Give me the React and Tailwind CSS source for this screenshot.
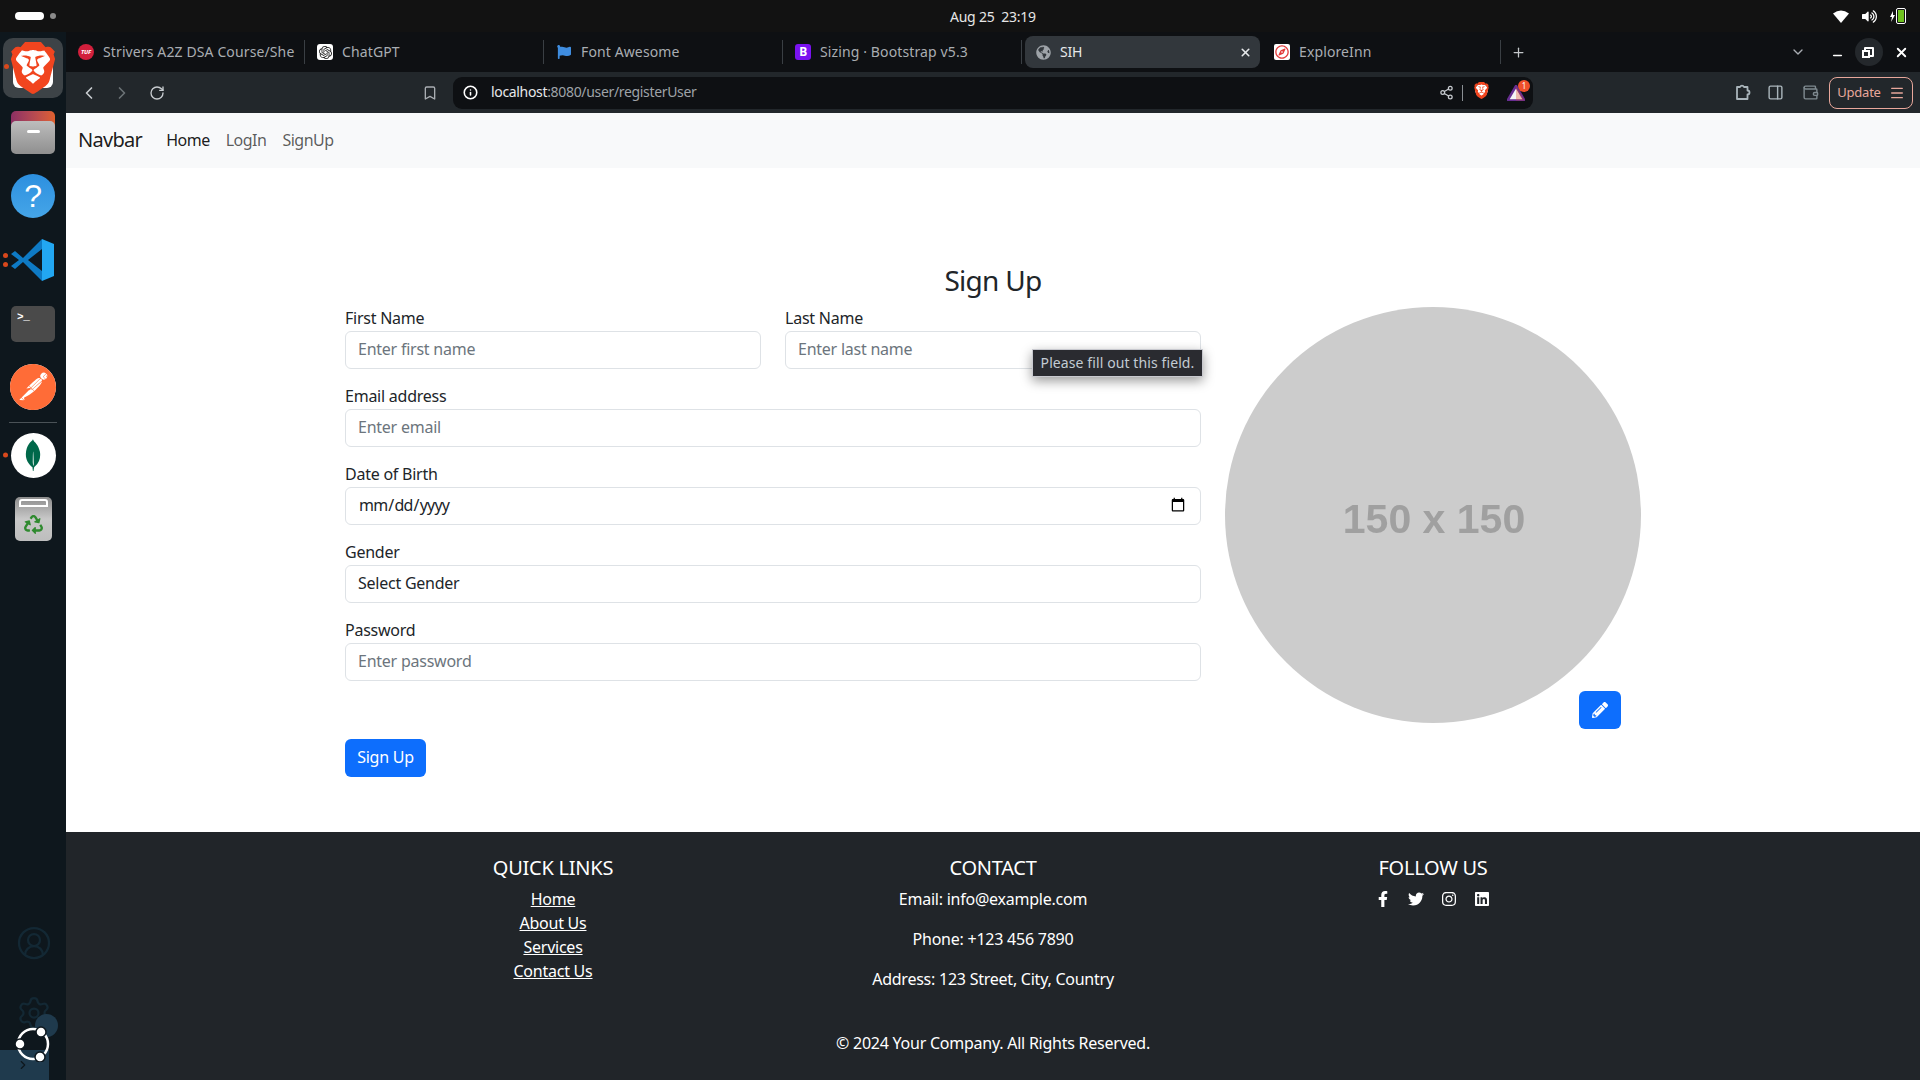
import React from 'react';
import {
  ChevronLeft, ChevronRight, RotateCw, Bookmark, Info, Share2, Plus, ChevronDown, X, Minus,
  PanelRight, Wallet, Menu, CircleUserRound, Settings,
} from 'lucide-react';
import {
  FaFacebookF, FaTwitter, FaInstagram, FaLinkedin, FaPencilAlt, FaFlag, FaGlobeAmericas,
  FaRegCompass, FaRecycle, FaVolumeUp,
} from 'react-icons/fa';
import { SiBrave, SiOpenai, SiPostman, SiMongodb } from 'react-icons/si';

const font = "font-['Noto_Sans','Open_Sans',sans-serif]";

const BraveMark = ({ size }) => (
  <span className="relative inline-flex items-center justify-center" style={{ width: size, height: size }}>
    <span className="absolute inset-[12%] bg-white rounded-md"></span>
    <SiBrave size={size} className="relative text-[#f1451f]" />
  </span>
);

const VsCodeMark = () => (
  <svg width="44" height="44" viewBox="0 0 44 44">
    <path d="M31 1 43 6V38L31 43Z" fill="#22a7f2" />
    <path d="M31 1 12 20 4 13 0 16 8 22 0 28 4 31 12 24 31 43V33L17 22 31 11Z" fill="#0e7ac4" />
  </svg>
);

const DockSlot = ({ children, dot = 0 }) => (
  <div className="relative h-16 flex items-center justify-center">
    {dot > 0 && (
      <div className="absolute left-[3px] top-1/2 -translate-y-1/2 flex flex-col gap-[4px]">
        {dot > 1 && <span className="block w-[5px] h-[5px] rounded-full bg-[#d9481c]"></span>}
        <span className="block w-[5px] h-[5px] rounded-full bg-[#d9481c]"></span>
      </div>
    )}
    {children}
  </div>
);

const Dock = () => (
  <aside className="relative w-[66px] shrink-0 bg-[#0e171d] overflow-hidden">
    <div className="pt-[6px] h-[68px]">
      <div className="relative mx-[3px] w-[60px] h-[60px] rounded-[10px] bg-[#3d4347] flex items-center justify-center">
        <BraveMark size={52} />
        <span className="absolute left-[1px] top-[26px] w-[5px] h-[5px] rounded-full bg-[#d9481c]"></span>
      </div>
    </div>
    <DockSlot>
      <div className="relative w-[44px] h-[43px]">
        <div className="h-[20px] w-full rounded-t-[5px] bg-gradient-to-r from-[#8c2f63] to-[#e0602c]"></div>
        <div className="absolute left-0 right-0 bottom-0 h-[33px] rounded-[5px] bg-gradient-to-b from-[#bdbdbd] to-[#8f8f8f] flex justify-center pt-[9px]">
          <span className="block w-[13px] h-[3px] rounded-sm bg-white"></span>
        </div>
      </div>
    </DockSlot>
    <DockSlot>
      <div className="w-[44px] h-[44px] rounded-full bg-gradient-to-b from-[#2c8fdf] to-[#45a5e8] flex items-center justify-center text-white text-[32px] font-['Liberation_Sans',sans-serif] leading-none">?</div>
    </DockSlot>
    <DockSlot dot={2}>
      <VsCodeMark />
    </DockSlot>
    <DockSlot>
      <div className="w-[44px] h-[36px] rounded-[5px] bg-[#4a4a4a] text-white font-['Liberation_Mono',monospace] text-[11px] leading-none pl-[6px] pt-[6px] font-bold">&gt;_</div>
    </DockSlot>
    <div className="-mt-px">
      <DockSlot>
        <div className="w-[46px] h-[46px] rounded-full bg-white flex items-center justify-center">
          <SiPostman size={46} className="text-[#ff6c37]" />
        </div>
      </DockSlot>
    </div>
    <div className="mx-[9px] mt-[3px] h-px bg-[#4a5257]"></div>
    <DockSlot dot={1}>
      <div className="w-[45px] h-[45px] rounded-full bg-white flex items-center justify-center">
        <SiMongodb size={32} className="text-[#00684a]" />
      </div>
    </DockSlot>
    <DockSlot>
      <div className="w-[37px] h-[44px] rounded-[5px] bg-gradient-to-b from-[#8d8d8d] via-[#c8c8c8] to-[#bdbdbd] flex flex-col items-center">
        <span className="block w-[29px] h-[8px] mt-[2px] border-2 border-white rounded-t-[3px]"></span>
        <FaRecycle size={19} className="text-[#2f8a2f] mt-[8px]" />
      </div>
    </DockSlot>

    {/* faint wallpaper bits, then the ubuntu button on top */}
    <CircleUserRound size={36} strokeWidth={1.5} className="absolute left-[16px] top-[893px] text-[#132834]" />
    <Settings size={36} strokeWidth={1.5} className="absolute left-[16px] top-[963px] text-[#132834]" />
    <div className="absolute left-[35px] top-[982px] w-[23px] h-[23px] rounded-full bg-[#1f3a4d]"></div>
    <div className="absolute left-0 bottom-0 w-[49px] h-[30px] bg-[#1f3a4d] flex items-center pl-[16px]">
      <ChevronRight size={14} className="text-[#0e171d]" />
    </div>
    <svg className="absolute left-[14px] top-[992px]" width="38" height="38" viewBox="0 0 38 38">
      <circle cx="19" cy="20" r="15" fill="none" stroke="white" strokeWidth="2.5" />
      <circle cx="6" cy="20" r="5" fill="white" stroke="#0e171d" strokeWidth="1.5" />
      <circle cx="27" cy="8" r="5" fill="white" stroke="#0e171d" strokeWidth="1.5" />
      <circle cx="26" cy="33" r="5" fill="white" stroke="#0e171d" strokeWidth="1.5" />
    </svg>
  </aside>
);

const TabItem = ({ icon, label, last = false }) => (
  <div className={`w-[239px] h-full shrink-0 flex items-center gap-[9px] pl-[12px] overflow-hidden ${last ? '' : 'border-r border-[#3a3f44]'}`}>
    <span className="w-4 h-4 shrink-0 flex items-center justify-center">{icon}</span>
    <span className="text-[14px] leading-[20px] pb-px tracking-[0.12px] text-[#a9adb2] whitespace-nowrap">{label}</span>
  </div>
);

const TabStrip = () => (
  <div className="h-10 bg-[#0e1013] flex items-center">
    <div className="h-[24px] flex items-center">
      <TabItem
        icon={<span className="w-4 h-4 rounded-full bg-[#d21f3c] text-white text-[6px] font-bold italic flex items-center justify-center">TUF</span>}
        label="Strivers A2Z DSA Course/She"
      />
      <TabItem
        icon={<span className="w-4 h-4 rounded-[3px] bg-white flex items-center justify-center"><SiOpenai size={13} className="text-[#222]" /></span>}
        label="ChatGPT"
      />
      <TabItem icon={<FaFlag size={14} className="text-[#3f8de0]" />} label="Font Awesome" />
      <TabItem
        icon={<span className="w-4 h-4 rounded-[3px] bg-[#7a12f0] text-white text-[12px] font-bold flex items-center justify-center">B</span>}
        label="Sizing · Bootstrap v5.3"
      />
    </div>
    <div className="w-[235px] h-8 ml-[3px] shrink-0 bg-[#32373c] rounded-[8px] flex items-center pl-[11px] pr-[8px]">
      <FaGlobeAmericas size={15} className="text-[#9ea3a8]" />
      <span className="ml-[9px] flex-1 text-[14px] leading-[20px] pb-px text-[#e6e8ea]">SIH</span>
      <X size={13} strokeWidth={3} className="text-[#e6e8ea]" />
    </div>
    <div className="h-[24px] ml-[2px] flex items-center">
      <TabItem
        icon={<span className="w-4 h-4 rounded-[2px] bg-white flex items-center justify-center"><FaRegCompass size={14} className="text-[#e23b3b]" /></span>}
        label="ExploreInn"
      />
    </div>
    <Plus size={15} className="ml-[10px] text-[#c4c7ca]" />
    <ChevronDown size={16} className="ml-[264px] text-[#a9adb2]" />
    <Minus size={13} strokeWidth={3} className="ml-[25px] mt-[7px] text-white" />
    <div className="ml-[11px] w-[28px] h-[28px] rounded-full bg-[#24282c] flex items-center justify-center">
      <span className="relative block w-[10px] h-[10px] border-2 border-white rounded-[1px]">
        <span className="absolute -left-[4px] top-[1px] w-[8px] h-[8px] border-2 border-white bg-[#24282c]"></span>
      </span>
    </div>
    <X size={15} strokeWidth={3} className="ml-[11px] text-white" />
  </div>
);

const Toolbar = () => (
  <div className="h-[41px] bg-[#22272b] flex items-center">
    <ChevronLeft size={20} className="ml-[13px] text-[#c8ccd0]" />
    <ChevronRight size={20} className="ml-[13px] text-[#6c7276]" />
    <RotateCw size={16} className="ml-[17px] text-[#c8ccd0]" />
    <Bookmark size={16} className="ml-[257px] text-[#a9adb2]" />
    <div className="ml-[15px] w-[1080px] h-8 rounded-[9px] bg-[#0e1013] flex items-center pl-[10px] pr-[6px]">
      <Info size={15} strokeWidth={2.5} className="text-white" />
      <span className="ml-[13px] flex-1 text-[14px] leading-[20px] pb-[2px] tracking-[-0.33px] text-[#9ea3a8]"><span className="text-[#e6e8ea]">localhost</span>:8080/user/registerUser</span>
      <Share2 size={15} className="text-[#c8ccd0]" />
      <span className="ml-[8px] w-px h-[16px] bg-[#8a8f94]"></span>
      <span className="ml-[10px]"><BraveMark size={17} /></span>
      <span className="relative ml-[17px] mr-[2px] w-[18px] h-[16px]">
        <svg width="18" height="16" viewBox="0 0 18 16">
          <path d="M9 1 17.5 15.5H.5z" fill="#f5f5f5" stroke="#662d91" strokeWidth="2.5" />
          <path d="M9 1 17.5 15.5H9z" fill="#e2502a" opacity=".35" />
        </svg>
        <span className="absolute -right-[5px] -top-[5px] w-[12px] h-[12px] rounded-full bg-[#f0502a] text-white text-[8px] leading-[12px] text-center">1</span>
      </span>
    </div>
    <svg className="ml-[202px] text-[#a9b4ba]" width="17" height="19" viewBox="0 0 17 19" fill="none" stroke="currentColor" strokeWidth="1.8">
      <path d="M2 4h3a2.2 2.2 0 0 1 4 0h3.5v3.5a2 2 0 0 1 0 4V16H2z" strokeLinejoin="round" />
    </svg>
    <PanelRight size={17} className="ml-[15px] text-[#a9b4ba]" />
    <Wallet size={17} className="ml-[18px] text-[#7f8a90]" />
    <div className="ml-[10px] w-[84px] h-8 rounded-[8px] border border-[#e8a79b] flex items-center justify-center gap-[8px] text-[13px] text-[#e8a79b]">
      Update <Menu size={16} />
    </div>
  </div>
);

const Navbar = () => (
  <nav className="h-[55px] bg-[#f8f9fa] flex items-center pl-3 pb-[2px] tracking-[-0.5px]">
    <a className="text-[20px] tracking-[-0.7px] text-black/90 mr-[24px]">Navbar</a>
    <a className="text-base text-black/90 mr-4">Home</a>
    <a className="text-base text-black/65 mr-4">LogIn</a>
    <a className="text-base text-black/65">SignUp</a>
  </nav>
);

const inputCls = 'block w-full h-[38px] px-3 pb-[2px] text-base text-[#212529] bg-white border border-[#dee2e6] rounded-[6px] outline-none placeholder:text-[#6c757d]';

const Field = ({ label, children }) => (
  <div className="mb-4 flex-1 relative">
    <label className="block text-base text-[#212529] leading-[22px] mb-[2px]">{label}</label>
    {children}
  </div>
);

const SignUpForm = () => (
  <main className="h-[664px] bg-white pt-[93px]">
    <h2 className="text-center text-[28px] tracking-[-0.7px] leading-[38px] mb-2 text-[#212529]">Sign Up</h2>
    <div className="w-[1296px] mx-auto flex gap-6">
      <form className="w-[856px]">
        <div className="flex gap-6">
          <Field label="First Name">
            <input className={inputCls} placeholder="Enter first name" />
          </Field>
          <Field label="Last Name">
            <input className={inputCls} placeholder="Enter last name" />
            {/* browser validation bubble */}
            <div className="absolute left-[247px] top-[42px] w-[171px] h-[28px] pb-[2px] bg-[#2a2b30] border border-[#c8c9cf] text-[#c3cbd3] text-[14px] tracking-[0.1px] flex items-center justify-center whitespace-nowrap shadow-[0_4px_12px_rgba(0,0,0,0.4)]">
              Please fill out this field.
            </div>
          </Field>
        </div>
        <Field label="Email address">
          <input className={inputCls} placeholder="Enter email" />
        </Field>
        <Field label="Date of Birth">
          <input type="date" className={`${inputCls} tracking-[-0.8px]`} />
        </Field>
        <Field label="Gender">
          <select className={`${inputCls} appearance-none`} defaultValue="">
            <option value="">Select Gender</option>
          </select>
        </Field>
        <Field label="Password">
          <input type="password" className={inputCls} placeholder="Enter password" />
        </Field>
        <button type="button" className="mt-[42px] w-[81px] h-[38px] pb-[2px] rounded-[6px] bg-[#0d6efd] text-white text-base">Sign Up</button>
      </form>
      <div className="relative w-[416px] h-[416px] rounded-full bg-[#cccccc] flex items-center justify-center">
        <span className="pt-[9px] pl-[2px] font-['Liberation_Sans',sans-serif] tracking-normal font-bold text-[41px] text-[#a0a0a0] blur-[0.7px]">150 x 150</span>
        <button type="button" className="absolute left-[354px] top-[384px] w-[42px] h-[38px] rounded-[6px] bg-[#0d6efd] flex items-center justify-center">
          <FaPencilAlt size={16} className="text-white" />
        </button>
      </div>
    </div>
  </main>
);

const Footer = () => (
  <footer className="h-[248px] bg-[#212529] text-white pt-6 text-center">
    <div className="w-[1296px] mx-auto grid grid-cols-3 gap-6 h-[152px]">
      <div>
        <h5 className="text-[20px] leading-6 mb-[7px]">QUICK LINKS</h5>
        <ul className="text-base leading-6 underline">
          <li>Home</li>
          <li>About Us</li>
          <li>Services</li>
          <li>Contact Us</li>
        </ul>
      </div>
      <div>
        <h5 className="text-[20px] leading-6 mb-[7px]">CONTACT</h5>
        <p className="leading-6 mb-4">Email: info@example.com</p>
        <p className="leading-6 mb-4">Phone: +123 456 7890</p>
        <p className="leading-6 mb-4">Address: 123 Street, City, Country</p>
      </div>
      <div>
        <h5 className="text-[20px] leading-6 mb-[7px]">FOLLOW US</h5>
        <div className="flex items-center justify-center gap-[17px] h-6 pr-[2px]">
          <FaFacebookF size={16} />
          <FaTwitter size={16} />
          <FaInstagram size={16} />
          <FaLinkedin size={16} />
        </div>
      </div>
    </div>
    <p className="mt-[23px] leading-6">© 2024 Your Company. All Rights Reserved.</p>
  </footer>
);

const TopBar = () => (
  <header className="h-8 bg-[#121212] relative flex items-center text-white">
    <span className="ml-[15px] w-[29px] h-[8px] rounded-full bg-white"></span>
    <span className="ml-[6px] w-[6px] h-[6px] rounded-full bg-[#8a8a8a]"></span>
    <span className="absolute left-[950px] text-[14px] text-[#e6e6e6]">Aug 25&nbsp; 23:19</span>
    <div className="ml-auto mr-[14px] flex items-center gap-[13px]">
      <svg width="16" height="14" viewBox="0 0 16 14"><path d="M8 14 0 4.5Q8-1.5 16 4.5Z" fill="white" /></svg>
      <FaVolumeUp size={15} />
      <span className="flex items-center gap-[1px]">
        <svg width="5" height="11" viewBox="0 0 5 11"><path d="M3 0 0 6h2l-1 5 4-7H3z" fill="white" /></svg>
        <span className="block w-[10px] h-[16px] border border-white rounded-[2px] p-[1px]"><span className="block w-full h-full bg-[#6fc21f]"></span></span>
      </span>
    </div>
  </header>
);

export default function App() {
  return (
    <div className={`h-[1080px] w-[1920px] overflow-hidden flex flex-col tracking-[-0.015em] ${font}`}>
      <TopBar />
      <div className="flex flex-1 min-h-0">
        <Dock />
        <div className="flex-1 min-w-0 flex flex-col">
          <TabStrip />
          <Toolbar />
          <Navbar />
          <SignUpForm />
          <Footer />
        </div>
      </div>
    </div>
  );
}
